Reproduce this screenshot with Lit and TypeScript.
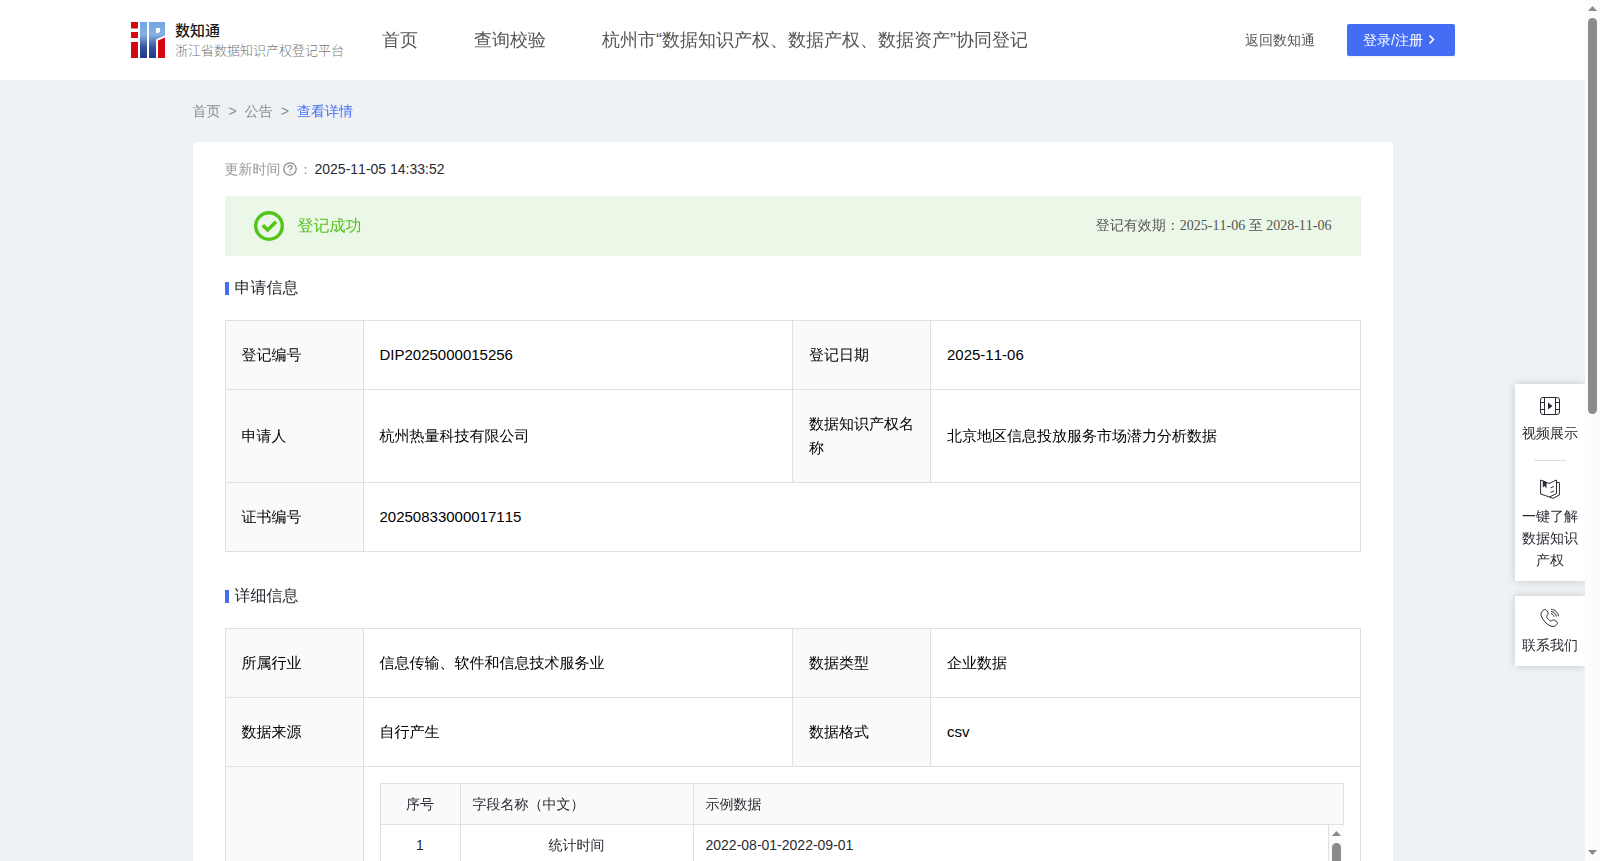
import { LitElement, html, css, svg } from "lit";
import { customElement, property } from "lit/decorators.js";

interface Field {
  label: string;
  value: string;
}

const NAV = ["首页", "查询校验", "杭州市“数据知识产权、数据产权、数据资产”协同登记"];

const APPLY_ROWS: Field[][] = [
  [
    { label: "登记编号", value: "DIP2025000015256" },
    { label: "登记日期", value: "2025-11-06" },
  ],
  [
    { label: "申请人", value: "杭州热量科技有限公司" },
    { label: "数据知识产权名称", value: "北京地区信息投放服务市场潜力分析数据" },
  ],
  [{ label: "证书编号", value: "20250833000017115" }],
];

const DETAIL_ROWS: Field[][] = [
  [
    { label: "所属行业", value: "信息传输、软件和信息技术服务业" },
    { label: "数据类型", value: "企业数据" },
  ],
  [
    { label: "数据来源", value: "自行产生" },
    { label: "数据格式", value: "csv" },
  ],
];

const logoMark = svg`
  <svg class="mark" viewBox="0 0 34 36" width="34" height="36" aria-hidden="true">
    <defs>
      <linearGradient id="blue" x1="0" y1="0" x2="0" y2="36" gradientUnits="userSpaceOnUse">
        <stop offset="0" stop-color="#6fa6e2" />
        <stop offset="0.35" stop-color="#86b0e4" />
        <stop offset="0.7" stop-color="#34559f" />
        <stop offset="1" stop-color="#22398a" />
      </linearGradient>
    </defs>
    <path fill="#d20a10" d="M0 0h7v6.500H0zM0 10h7v6H0zM0 20h7v16H0zM27 18.500l7-3V36h-7z" />
    <path fill="url(#blue)" fill-rule="evenodd" d="M9 0h7v36H9zM18 0h16v13.500l-9 4V36h-7zM25 6v5.500l4-1.500V6z" />
  </svg>`;

@customElement("scroll-rail")
export class ScrollRail extends LitElement {
  @property({ type: Number }) size = 50;

  static styles = css`
    :host {
      display: flex;
      flex-direction: column;
      align-items: center;
      width: 15px;
      padding: 6px 0;
      box-sizing: border-box;
      background: #fcfcfc;
    }
    .arrow {
      flex: none;
      fill: #8b8b8b;
    }
    .track {
      flex: 1;
      width: 9px;
      margin: 7px 0;
    }
    .thumb {
      border-radius: 5px;
      background: #8b8b8b;
    }
  `;

  render() {
    return html`
      <svg class="arrow" width="9" height="5" viewBox="0 0 9 5"><path d="M4.500 0 9 5H0z" /></svg>
      <div class="track"><div class="thumb" style="height:${this.size}%"></div></div>
      <svg class="arrow" width="9" height="5" viewBox="0 0 9 5"><path d="M0 0h9L4.500 5z" /></svg>
    `;
  }
}

@customElement("app-root")
export class AppRoot extends LitElement {
  static styles = css`
    :host {
      display: flex;
      height: 100vh;
      color: #2a2a33;
      font-family: "Liberation Sans", "Droid Sans Fallback", "WenQuanYi Zen Hei", "Noto Sans CJK SC", sans-serif;
      font-size: 14px;
      font-kerning: none;
      line-height: 22px;
    }
    * {
      box-sizing: border-box;
    }
    a {
      color: inherit;
      text-decoration: none;
    }
    h2 {
      margin: 0;
    }
    .view {
      flex: 1;
      min-width: 0;
      overflow-y: auto;
      scrollbar-width: none;
      background: #eef2f5;
    }
    .header {
      display: flex;
      align-items: center;
      height: 80px;
      padding: 0 130px;
      background: #fff;
      color: #555;
    }
    .logo {
      display: flex;
      align-items: center;
      gap: 10px;
      width: 252px;
    }
    .mark {
      margin-left: 1px;
      flex: none;
    }
    .brand {
      display: flex;
      flex-direction: column;
      white-space: nowrap;
      font-family: "Noto Sans CJK SC", sans-serif;
      line-height: 20px;
    }
    .brand-name {
      font-size: 15px;
      font-weight: 500;
      color: #1a1a1a;
    }
    .brand-sub {
      font-size: 13px;
      font-weight: 300;
      color: #777;
    }
    .nav {
      display: flex;
      flex: 1;
      gap: 56px;
      font-size: 18px;
      white-space: nowrap;
    }
    .login {
      display: flex;
      align-items: center;
      gap: 4px;
      width: 108px;
      height: 32px;
      margin-left: 32px;
      padding: 0 16px;
      border: 0;
      border-radius: 2px;
      background: #446df6;
      box-shadow: 0 2px 0 rgba(0, 0, 0, 0.04);
      color: #fff;
      font: inherit;
      white-space: nowrap;
    }
    .page {
      max-width: 1200px;
      margin: 0 auto;
      padding-bottom: 40px;
    }
    .crumbs {
      display: flex;
      gap: 8px;
      padding: 20px 0;
      color: #8c8c8c;
    }
    .current {
      color: #446df6;
    }
    .card {
      padding: 16px 32px 32px;
      border-radius: 4px;
      background: #fff;
    }
    .updated {
      display: flex;
      align-items: center;
      color: #999;
    }
    .updated time {
      margin-left: 2px;
      color: #2a2a33;
    }
    .help {
      margin: 0 2px;
    }
    .result {
      display: flex;
      align-items: center;
      height: 60px;
      margin: 16px 0 20px;
      padding: 0 29px;
      background: #ebf7e7;
      color: #52c41a;
      font-size: 16px;
    }
    .result-text {
      flex: 1;
      margin-left: 14px;
    }
    .validity {
      color: #555;
      font-family: "Liberation Serif", "Droid Sans Fallback", "WenQuanYi Zen Hei", "Noto Sans CJK SC", serif;
      font-size: 14px;
    }
    .title {
      display: flex;
      align-items: center;
      gap: 6px;
      margin-bottom: 20px;
      font-size: 16px;
      font-weight: 400;
      line-height: 24px;
    }
    .title::before {
      content: "";
      width: 4px;
      height: 13px;
      background: #446df6;
    }
    .info {
      width: 100%;
      margin-bottom: 32px;
      border-collapse: collapse;
      table-layout: fixed;
      color: #000;
      font-size: 15px;
      line-height: 24px;
    }
    .label-col {
      width: 138px;
    }
    .info > tbody > tr > th,
    .info > tbody > tr > td {
      padding: 22px 16px;
      border: 1px solid #e0e0e0;
      text-align: left;
      font-weight: 400;
    }
    .info > tbody > tr > th {
      background: #fafafa;
    }
    .info > tbody > tr > td.nested {
      padding: 16px;
    }
    .sample {
      border-left: 1px solid #e0e0e0;
      color: #2a2a33;
      font-size: 14px;
      line-height: 22px;
    }
    .sample-scroll {
      display: flex;
      height: 400px;
    }
    .sample-body {
      flex: 1;
      min-width: 0;
      overflow-y: auto;
      scrollbar-width: none;
    }
    .sample table {
      width: 100%;
      border-collapse: separate;
      border-spacing: 0;
      table-layout: fixed;
    }
    .sample .num {
      width: 80px;
    }
    .sample .name {
      width: 233px;
    }
    .sample th,
    .sample td {
      height: 41px;
      padding: 0 12px;
      border: 0 solid #e0e0e0;
      border-width: 0 1px 1px 0;
      font-weight: 400;
      text-align: left;
    }
    .sample th {
      height: 42px;
      border-top-width: 1px;
      background: #fafafa;
    }
    .sample .center {
      text-align: center;
    }
    .side {
      position: fixed;
      top: 384px;
      right: 15px;
      display: flex;
      flex-direction: column;
      gap: 15px;
      width: 70px;
    }
    .panel {
      display: flex;
      flex-direction: column;
      align-items: center;
      padding: 12px 6px 10px;
      background: #fff;
      box-shadow: 0 0 8px rgba(0, 0, 0, 0.18);
      clip-path: inset(-12px 0 -12px -12px);
    }
    .tool {
      display: flex;
      flex-direction: column;
      align-items: center;
      gap: 6px;
      text-align: center;
    }
    .rule {
      width: 32px;
      height: 1px;
      margin: 16px 0 18px;
      border: 0;
      background: #ddd;
    }
  `;

  private renderInfo(rows: Field[][], extra: unknown = null) {
    return html`<table class="info">
      <colgroup>
        <col class="label-col" />
        <col />
        <col class="label-col" />
        <col />
      </colgroup>
      <tbody>
        ${rows.map(
          (row) => html`<tr>
            ${row.map(
              (field) => html`<th scope="row">${field.label}</th>
                <td colspan=${row.length === 1 ? 3 : 1}>${field.value}</td>`,
            )}
          </tr>`,
        )}
        ${extra}
      </tbody>
    </table>`;
  }

  private renderSample() {
    const cols = html`<colgroup>
      <col class="num" />
      <col class="name" />
      <col />
    </colgroup>`;
    return html`<tr>
      <th></th>
      <td class="nested" colspan="3">
        <div class="sample">
          <table>
            ${cols}
            <thead>
              <tr>
                <th class="center">序号</th>
                <th>字段名称（中文）</th>
                <th>示例数据</th>
              </tr>
            </thead>
          </table>
          <div class="sample-scroll">
            <div class="sample-body" tabindex="0">
              <table>
                ${cols}
                <tbody>
                  <tr>
                    <td class="center">1</td>
                    <td class="center">统计时间</td>
                    <td>2022-08-01-2022-09-01</td>
                  </tr>
                </tbody>
              </table>
            </div>
            <scroll-rail size="60"></scroll-rail>
          </div>
        </div>
      </td>
    </tr>`;
  }

  render() {
    return html`
      <div class="view">
        <header class="header">
          <a class="logo" href="#">
            ${logoMark}
            <span class="brand">
              <span class="brand-name">数知通</span>
              <span class="brand-sub">浙江省数据知识产权登记平台</span>
            </span>
          </a>
          <nav class="nav">${NAV.map((item) => html`<a href="#">${item}</a>`)}</nav>
          <a href="#">返回数知通</a>
          <button class="login" type="button">
            登录/注册
            <svg width="10" height="10" viewBox="0 0 10 10" fill="none" stroke="#fff" stroke-width="1.600">
              <path d="M2.500 0.500 6.500 4.500 2.500 8.500" />
            </svg>
          </button>
        </header>

        <main class="page">
          <nav class="crumbs">
            <a href="#">首页</a><span>&gt;</span><a href="#">公告</a><span>&gt;</span>
            <a class="current" href="#">查看详情</a>
          </nav>
          <section class="card">
            <div class="updated">
              更新时间
              <svg class="help" width="14" height="14" viewBox="0 0 14 14" fill="none" stroke="#8c8c8c" stroke-width="1.300">
                <circle cx="7" cy="7" r="6.200" />
                <path d="M5 5.600C5 4.300 5.900 3.600 7 3.600s2 .7 2 1.800c0 1.500-2 1.500-2 2.900" />
                <path d="M7 9.500v1.300" />
              </svg>
              ：<time>2025-11-05 14:33:52</time>
            </div>
            <div class="result">
              <svg width="30" height="30" viewBox="0 0 30 30" fill="none" stroke="#52c41a">
                <circle cx="15" cy="15" r="13.300" stroke-width="3.400" />
                <path d="M8.800 14.200 13.600 19 22 10.800" stroke-width="3.600" />
              </svg>
              <span class="result-text">登记成功</span>
              <span class="validity">登记有效期：2025-11-06 至 2028-11-06</span>
            </div>
            <h2 class="title">申请信息</h2>
            ${this.renderInfo(APPLY_ROWS)}
            <h2 class="title">详细信息</h2>
            ${this.renderInfo(DETAIL_ROWS, this.renderSample())}
          </section>
        </main>
      </div>
      <scroll-rail size="48"></scroll-rail>

      <aside class="side">
        <div class="panel">
          <a class="tool" href="#">
            <svg width="20" height="20" viewBox="0 0 20 20" fill="none" stroke="#2a2a33">
              <rect x="0.500" y="1.500" width="19" height="17" rx="2.500" />
              <path d="M4.500 1.500v17M15.500 1.500v17M.5 6.500h4M.5 13.500h4M15.500 6.500h4M15.500 13.500h4" />
              <path d="M8 6.500v7l4.500-3.500z" fill="#2a2a33" stroke="none" />
            </svg>
            视频展示
          </a>
          <hr class="rule" />
          <a class="tool" href="#">
            <svg width="20" height="20" viewBox="0 0 20 20" fill="none" stroke="#2a2a33">
              <path d="M.6 1 9 4.500 16.500 1v13.500L9.500 18 .6 15z" />
              <path d="M16.500 3.500h2.900v12.500L13 19.400 9.500 18" />
              <path d="M2.800 1.500v7l1.900-1.500 1.800 2.500V3z" fill="#2a2a33" stroke="none" />
              <path d="M10.500 9 14 7.400M10.500 13.500l3.500-1.600" />
            </svg>
            <span>一键了解数据知识产权</span>
          </a>
        </div>
        <div class="panel">
          <a class="tool" href="#">
            <svg width="20" height="20" viewBox="0 0 20 20" fill="none" stroke="#2a2a33">
              <path d="M3.200 2.300C4.500 1 6 1.200 6.900 2.700l1 1.700c.6 1.200.3 2-.6 2.800-1 .9-.8 1.800.3 3.200 1.300 1.700 2.800 2.900 4 2.400 1-.6 1.700-1.200 2.800-.6l2 1.200c1.200.8 1.300 2 .3 3.200-1.500 2-4 2.400-6.700 1.200C6 15.800 2.600 11.800 1.200 7.800.6 5.500 1.500 3.600 3.200 2.300z" />
              <path d="M11 5.600c1.700.3 2.800 1.400 3.100 3" />
              <path d="M11 1.200c4 .3 7 3 7.500 7M11 3.400c2.900.3 5 2.300 5.400 5.100" />
            </svg>
            联系我们
          </a>
        </div>
      </aside>
    `;
  }
}
